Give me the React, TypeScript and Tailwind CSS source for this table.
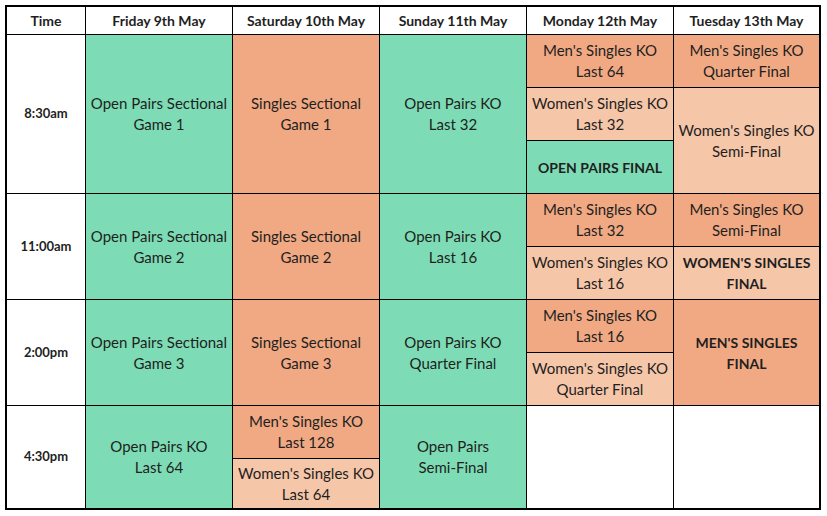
const GREEN = "bg-[#7ddcb5]";
const SALMON = "bg-[#f0a983]";
const PEACH = "bg-[#f6c6a9]";

type Slot = { lines: string[]; bg: string; bold?: boolean; fixed?: boolean };

function Cell({ slot }: { slot: Slot }) {
  return (
    <div
      className={`flex flex-col items-center justify-center text-center leading-[21px] ${slot.bg} ${
        slot.fixed ? "h-[52px] shrink-0" : "flex-1"
      } ${slot.bold ? "text-[14px] font-bold" : "text-[15px]"}`}
    >
      {slot.lines.map((l) => (
        <span key={l}>{l}</span>
      ))}
    </div>
  );
}

function Stack({ slots }: { slots: Slot[] }) {
  return (
    <div className="flex flex-col gap-px bg-black">
      {slots.map((s, i) => (
        <Cell key={i} slot={s} />
      ))}
    </div>
  );
}

const HEADERS = [
  "Time",
  "Friday 9th May",
  "Saturday 10th May",
  "Sunday 11th May",
  "Monday 12th May",
  "Tuesday 13th May",
];

const g = (a: string, b?: string): Slot => ({ lines: b ? [a, b] : [a], bg: GREEN });
const s = (a: string, b?: string): Slot => ({ lines: b ? [a, b] : [a], bg: SALMON });
const p = (a: string, b?: string): Slot => ({ lines: b ? [a, b] : [a], bg: PEACH });

const ROWS: { time: string; days: Slot[][] }[] = [
  {
    time: "8:30am",
    days: [
      [g("Open Pairs Sectional", "Game 1")],
      [s("Singles Sectional", "Game 1")],
      [g("Open Pairs KO", "Last 32")],
      [
        s("Men's Singles KO", "Last 64"),
        p("Women's Singles KO", "Last 32"),
        { lines: ["OPEN PAIRS FINAL"], bg: GREEN, bold: true },
      ],
      [{ ...s("Men's Singles KO", "Quarter Final"), fixed: true }, p("Women's Singles KO", "Semi-Final")],
    ],
  },
  {
    time: "11:00am",
    days: [
      [g("Open Pairs Sectional", "Game 2")],
      [s("Singles Sectional", "Game 2")],
      [g("Open Pairs KO", "Last 16")],
      [s("Men's Singles KO", "Last 32"), p("Women's Singles KO", "Last 16")],
      [s("Men's Singles KO", "Semi-Final"), { lines: ["WOMEN'S SINGLES", "FINAL"], bg: PEACH, bold: true }],
    ],
  },
  {
    time: "2:00pm",
    days: [
      [g("Open Pairs Sectional", "Game 3")],
      [s("Singles Sectional", "Game 3")],
      [g("Open Pairs KO", "Quarter Final")],
      [s("Men's Singles KO", "Last 16"), p("Women's Singles KO", "Quarter Final")],
      [{ lines: ["MEN'S SINGLES", "FINAL"], bg: SALMON, bold: true }],
    ],
  },
  {
    time: "4:30pm",
    days: [
      [g("Open Pairs KO", "Last 64")],
      [{ ...s("Men's Singles KO", "Last 128"), fixed: true }, p("Women's Singles KO", "Last 64")],
      [g("Open Pairs", "Semi-Final")],
      [{ lines: [""], bg: "bg-white" }],
      [{ lines: [""], bg: "bg-white" }],
    ],
  },
];

export default function App() {
  return (
    <div className="h-[516px] w-[827px] bg-white pl-[5px] pt-[5px] font-['Lato','Liberation_Sans',sans-serif] text-[#1f1f1f]">
      <div className="grid w-fit grid-cols-[78px_146px_146px_146px_146px_145px] grid-rows-[27px_158px_105px_105px_102px] gap-px border-2 border-black bg-black">
        {HEADERS.map((h) => (
          <div key={h} className="flex items-center justify-center bg-white text-[14px] font-bold">
            {h}
          </div>
        ))}
        {ROWS.map((r) => (
          <div key={r.time} className="contents">
            <div className="flex items-center justify-center bg-white text-[13px] font-bold">{r.time}</div>
            {r.days.map((d, i) => (
              <Stack key={i} slots={d} />
            ))}
          </div>
        ))}
      </div>
    </div>
  );
}
